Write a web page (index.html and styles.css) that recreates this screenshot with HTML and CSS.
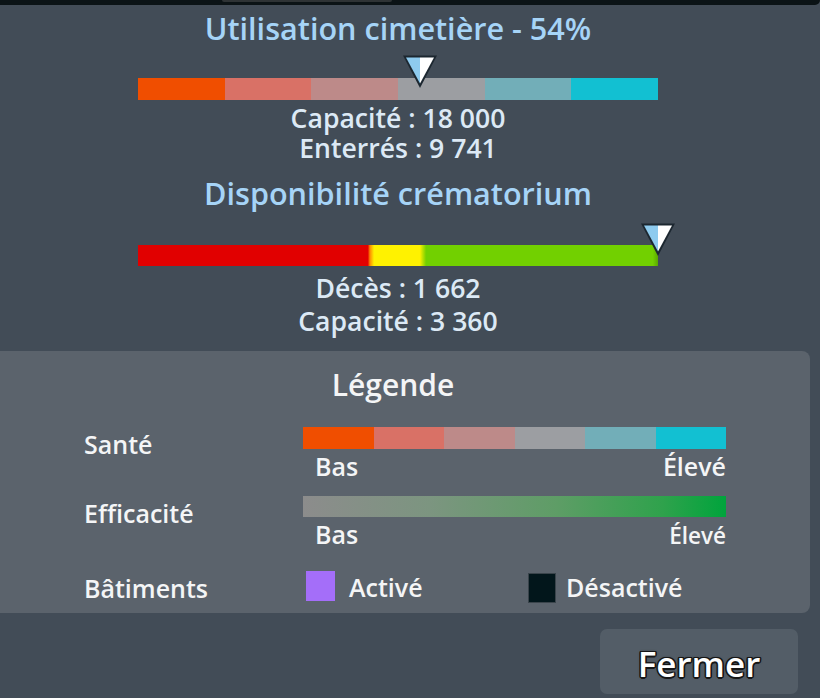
FILE: index.html
```html
<!DOCTYPE html>
<html lang="fr">
<head>
<meta charset="utf-8">
<title>Cimetière</title>
<link rel="stylesheet" href="styles.css">
</head>
<body>
<div class="topstrip"><div class="tab"></div></div>
<section class="stats">
  <h2 class="title">Utilisation cimetière - 54%</h2>
  <div class="barwrap bar1">
    <div class="seg s1"></div><div class="seg s2"></div><div class="seg s3"></div>
    <div class="seg s4"></div><div class="seg s5"></div><div class="seg s6"></div>
    <svg class="marker" style="left:54.2%" width="38" height="36" viewBox="0 0 38 36">
      <polygon points="2,1.5 36,1.5 19,34" fill="#1c2730"/>
      <polygon points="5,3.5 19,3.5 19,29.5" fill="#8ecbef"/>
      <polygon points="19,3.5 33,3.5 19,29.5" fill="#ffffff"/>
    </svg>
  </div>
  <div class="lines l1">
    <div>Capacité : 18 000</div>
    <div>Enterrés : 9 741</div>
  </div>
  <h2 class="title t2">Disponibilité crématorium</h2>
  <div class="barwrap bar2">
    <svg class="marker" style="left:100%" width="38" height="36" viewBox="0 0 38 36">
      <polygon points="2,1.5 36,1.5 19,34" fill="#1c2730"/>
      <polygon points="5,3.5 19,3.5 19,29.5" fill="#8ecbef"/>
      <polygon points="19,3.5 33,3.5 19,29.5" fill="#ffffff"/>
    </svg>
  </div>
  <div class="lines l2">
    <div>Décès : 1 662</div>
    <div>Capacité : 3 360</div>
  </div>
</section>
<section class="legend">
  <h3 class="ltitle">Légende</h3>
  <div class="lrow">
    <div class="llabel">Santé</div>
    <div class="lcol">
      <div class="lbar sante">
        <div class="seg s1"></div><div class="seg s2"></div><div class="seg s3"></div>
        <div class="seg s4"></div><div class="seg s5"></div><div class="seg s6"></div>
      </div>
      <div class="scale"><span>Bas</span><span>Élevé</span></div>
    </div>
  </div>
  <div class="lrow r2">
    <div class="llabel">Efficacité</div>
    <div class="lcol">
      <div class="lbar eff"></div>
      <div class="scale"><span>Bas</span><span class="small">Élevé</span></div>
    </div>
  </div>
  <div class="lrow r3">
    <div class="llabel">Bâtiments</div>
    <div class="builds">
      <div class="item on"><span class="sq sq-on"></span><span>Activé</span></div>
      <div class="item off"><span class="sq sq-off"></span><span>Désactivé</span></div>
    </div>
  </div>
</section>
<div class="actions"><button class="close">Fermer</button></div>
</body>
</html>
```
FILE: styles.css
```css
* { box-sizing: border-box; }
html, body { margin: 0; padding: 0; }
body {
  width: 820px;
  height: 698px;
  overflow: hidden;
  background: #424c57;
  font-family: "Open Sans", "Noto Sans", sans-serif;
  font-weight: 600;
  color: #eef3f8;
}
.topstrip {
  height: 5px;
  background: #0b1316;
  display: flex;
  border-bottom-right-radius: 6px;
}
.tab {
  margin-left: 222px;
  width: 170px;
  height: 2px;
  background: #2e3335;
  border-radius: 0 0 4px 4px;
}
.stats {
  display: flex;
  flex-direction: column;
  align-items: center;
  padding-right: 24px;
}
.title {
  margin: 5px 0 0;
  font-size: 30.6px;
  line-height: 36px;
  font-weight: 600;
  color: #a6d4f7;
}
.title.t2 { margin-top: 12px; }
.barwrap {
  position: relative;
  width: 520px;
  height: 22px;
  display: flex;
  margin-top: 32px;
}
.bar2 {
  margin-top: 34px;
  height: 21px;
  background: linear-gradient(to right, #e10000 0, #e10000 44.2%, #ff8a00 44.6%, #fff200 45.4%, #fff200 54.2%, #b8e000 54.8%, #72d000 55.4%, #72d000 99%, #5aa800 100%);
}
.seg { flex: 1; height: 100%; }
.s1 { background: #f04e00; }
.s2 { background: #d97166; }
.s3 { background: #bd8a89; }
.s4 { background: #9c9ea2; }
.s5 { background: #72aeb8; }
.s6 { background: #12c0d2; }
.marker {
  position: absolute;
  top: -24px;
  margin-left: -19px;
  display: block;
}
.bar2 .marker { top: -23px; }
.lines {
  margin-top: 4px;
  font-size: 26.6px;
  line-height: 29.5px;
  text-align: center;
  color: #dce9f5;
}
.lines.l2 { margin-top: 6px; line-height: 33px; }
.legend {
  margin-top: 13px;
  width: 810px;
  height: 262px;
  background: #5b636c;
  border-radius: 0 8px 8px 0;
  padding-top: 16px;
  color: #f4f5f6;
}
.ltitle {
  margin: 0 24px 0 0;
  text-align: center;
  font-size: 30px;
  line-height: 36px;
  font-weight: 600;
}
.lrow {
  display: grid;
  grid-template-columns: 219px 423px;
  padding-left: 84px;
  margin-top: 24px;
}
.lrow.r2 { margin-top: 15px; }
.lrow.r3 { margin-top: 21px; }
.llabel {
  font-size: 25px;
  line-height: 29px;
  margin-top: 3px;
}
.lbar { height: 22px; display: flex; }
.lbar.eff {
  height: 21px;
  background: linear-gradient(to right, #8c8c8c 0%, #7c9580 30%, #5e9d66 60%, #2fa24c 85%, #00a43c 100%);
}
.scale {
  display: flex;
  justify-content: space-between;
  align-items: baseline;
  padding-left: 12px;
  font-size: 25px;
  line-height: 29px;
  margin-top: 3px;
}
.scale .small { font-size: 22.5px; }
.builds {
  display: flex;
  align-items: center;
  font-size: 25px;
  line-height: 29px;
  padding-left: 3px;
}
.item { display: flex; align-items: center; }
.item.on { width: 222px; gap: 14px; }
.item.off { gap: 10px; }
.sq { display: block; width: 29px; height: 30px; }
.sq-on { background: #a46ef9; margin-top: -2px; }
.sq-off { background: #02161b; border: 1px solid #3a444b; width: 28px; margin-top: 2px; }
.actions {
  display: flex;
  justify-content: flex-end;
  padding-right: 22px;
  margin-top: 16px;
}
.close {
  width: 198px;
  height: 65px;
  border: none;
  border-radius: 7px;
  background: #535d67;
  font-family: "Open Sans", "Noto Sans", sans-serif;
  font-weight: 600;
  font-size: 35px;
  line-height: 40px;
  color: #ffffff;
  padding: 4px 0 0 0;
  text-shadow: -1.5px 0 0 #161616, 1.5px 0 0 #161616, 0 -1.5px 0 #161616, 0 1.5px 0 #161616,
    -1.2px -1.2px 0 #161616, 1.2px 1.2px 0 #161616, -1.2px 1.2px 0 #161616, 1.2px -1.2px 0 #161616,
    0 0 3px rgba(0,0,0,0.6);
}
```
